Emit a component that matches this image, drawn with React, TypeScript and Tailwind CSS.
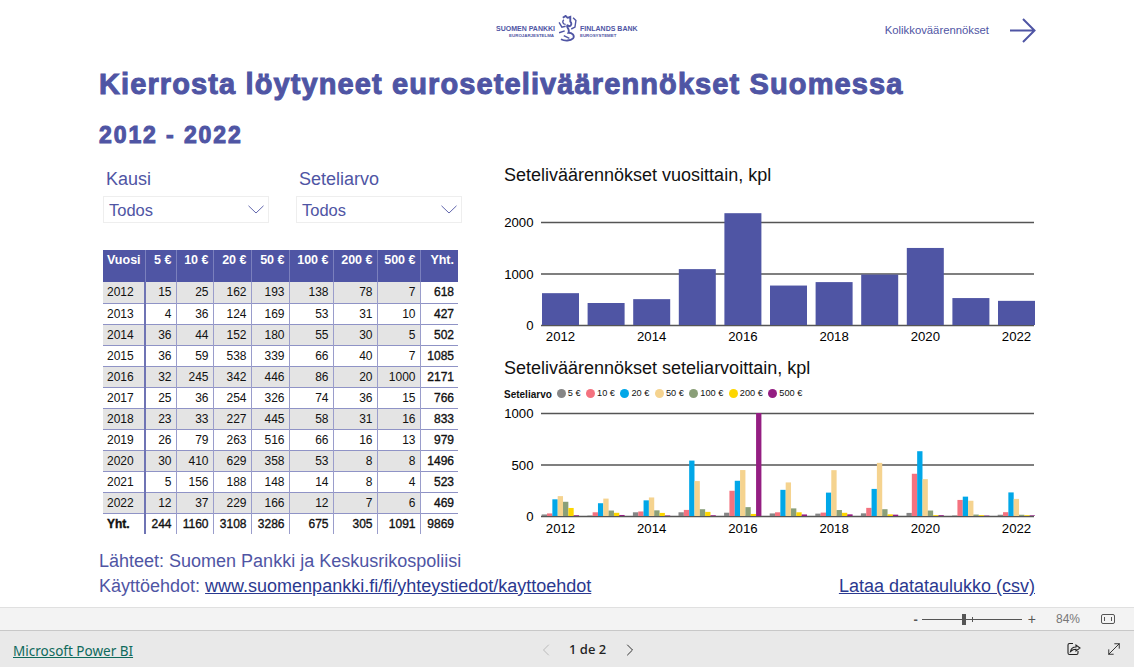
import React from 'react';
import { ChevronLeft, ChevronRight, MoveDiagonal } from 'lucide-react';

const headers = ['Vuosi', '5 €', '10 €', '20 €', '50 €', '100 €', '200 €', '500 €', 'Yht.'];
const colWidths = ['w-[42px]', 'w-[31px]', 'w-[37px]', 'w-[38px]', 'w-[38px]', 'w-[44px]', 'w-[44px]', 'w-[43px]', 'w-[38px]'];

const rows = [
  [2012, 15, 25, 162, 193, 138, 78, 7, 618],
  [2013, 4, 36, 124, 169, 53, 31, 10, 427],
  [2014, 36, 44, 152, 180, 55, 30, 5, 502],
  [2015, 36, 59, 538, 339, 66, 40, 7, 1085],
  [2016, 32, 245, 342, 446, 86, 20, 1000, 2171],
  [2017, 25, 36, 254, 326, 74, 36, 15, 766],
  [2018, 23, 33, 227, 445, 58, 31, 16, 833],
  [2019, 26, 79, 263, 516, 66, 16, 13, 979],
  [2020, 30, 410, 629, 358, 53, 8, 8, 1496],
  [2021, 5, 156, 188, 148, 14, 8, 4, 523],
  [2022, 12, 37, 229, 166, 12, 7, 6, 469],
];
const totals = ['Yht.', 244, 1160, 3108, 3286, 675, 305, 1091, 9869];

const legend = [
  { label: '5 €', color: '#868686' },
  { label: '10 €', color: '#f4727f' },
  { label: '20 €', color: '#01a7e8' },
  { label: '50 €', color: '#f5d38f' },
  { label: '100 €', color: '#8a9f78' },
  { label: '200 €', color: '#fdd600' },
  { label: '500 €', color: '#941e82' },
];

const PITCH = 45.6;
const years = rows.map((r) => r[0]);

const YearLabels = ({ y }: { y: number }) => (
  <>
    {years.map((year, i) =>
      i % 2 === 0 ? (
        <text key={year} x={38 + i * PITCH + 18.5} y={y} textAnchor="middle" fontSize="13.2" fill="#000">
          {year}
        </text>
      ) : null,
    )}
  </>
);

const GridLine = ({ y, label }: { y: number; label: string }) => (
  <>
    <line x1="37" x2="530" y1={y} y2={y} stroke="#555" strokeWidth="1.3" />
    <text x="29.5" y={y + 4.5} textAnchor="end" fontSize="13.2" fill="#000">
      {label}
    </text>
  </>
);

const TotalChart = () => (
  <svg width="531" height="140" className="block">
    <GridLine y={17.5} label="2000" />
    <GridLine y={69} label="1000" />
    <GridLine y={120.5} label="0" />
    {rows.map((r, i) => {
      const h = r[8] * 0.0515;
      return <rect key={r[0]} x={38 + i * PITCH} y={120 - h} width="37" height={h} fill="#4f55a4" />;
    })}
    <YearLabels y={136} />
  </svg>
);

const DenomChart = () => (
  <svg width="531" height="136" className="block">
    <GridLine y={11.5} label="1000" />
    <GridLine y={63} label="500" />
    <GridLine y={114.5} label="0" />
    {rows.map((r, i) =>
      legend.map((l, j) => {
        const h = Math.min(r[j + 1] * 0.103, 103);
        return <rect key={l.label} x={37.7 + i * PITCH + j * 5.33} y={114 - h} width="5.33" height={h} fill={l.color} />;
      }),
    )}
    <YearLabels y={130.5} />
  </svg>
);

const Dropdown = ({ label }: { label: string }) => (
  <div className="w-[166px]">
    <div className="pl-[3px] text-[18px] leading-[22px] text-[#4f55a4]">{label}</div>
    <div className="mt-[6px] flex h-[27px] items-center justify-between border border-[#eeeeee] pl-[5px] pr-[4px]">
      <span className="pt-[1px] text-[16.5px] text-[#4f55a4]">Todos</span>
      <svg width="16" height="9" viewBox="0 0 16 9" fill="none" stroke="#4f55a4" strokeWidth="0.9">
        <path d="M0.5 0.8 L8 8 L15.5 0.8" />
      </svg>
    </div>
  </div>
);

const Logo = () => (
  <div className="flex items-center text-[#4f55a4]">
    <div className="flex w-[59px] flex-col items-end pt-[6px]">
      <span className="text-[7px] font-bold leading-[8px] whitespace-nowrap">SUOMEN PANKKI</span>
      <span className="pr-[1px] text-[4.4px] font-bold leading-[6px] whitespace-nowrap">EUROJÄRJESTELMÄ</span>
    </div>
    <svg width="23" height="28" viewBox="0 0 24 30" fill="none" stroke="currentColor" className="mx-[1px]">
      <path d="M7 3 L10 1 L12 3 L15 2 L15 7 C17 9 16 12 14 12 L12 11 C10 13 15 15 13 19 C17 19 20 22 18 25 C15 28 9 28 5 26" strokeWidth="2" />
      <path d="M8 5 C6 7 7 10 10 10 M3 8 L6 13 L10 12 M18 3 L21 6 L20 13 L16 15 M8 22 L14 25 M3 19 L9 17" strokeWidth="1.5" />
    </svg>
    <div className="flex w-[59px] flex-col items-start pt-[6px]">
      <span className="text-[7px] font-bold leading-[8px] whitespace-nowrap">FINLANDS BANK</span>
      <span className="text-[4.4px] font-bold leading-[6px] whitespace-nowrap">EUROSYSTEMET</span>
    </div>
  </div>
);

const ShareIcon = () => (
  <svg width="14" height="14" viewBox="0 0 14 14" fill="none" stroke="#222" strokeWidth="1.1">
    <path d="M6 1.5 H2.5 C1.5 1.5 1 2 1 3 V11 C1 12 1.5 12.5 2.5 12.5 H9.5 C10.5 12.5 11 12 11 11 V9" />
    <path d="M3.5 9.5 C4 6.5 6 5 9 5 V3 L13 6 L9 9 V7.2 C7 7.2 5 8 3.5 9.5 Z" />
  </svg>
);

const App = () => {
  return (
    <div className="flex h-[667px] w-[1134px] flex-col overflow-hidden bg-white font-['Liberation_Sans',Arial,sans-serif]">
      <main className="flex h-[607px] flex-col">
        {/* Top row */}
        <div className="relative flex h-[60px] items-center justify-end pr-[98px]">
          <div className="absolute left-[496px] top-[15px]">
            <Logo />
          </div>
          <span className="mr-[20px] text-[11.3px] text-[#4f55a4]">Kolikkoväärennökset</span>
          <svg width="27" height="27" viewBox="0 0 27 27" fill="none" stroke="#4f55a4" strokeWidth="2">
            <path d="M1 13.5 H25.5 M14 2 L25.5 13.5 L14 25" />
          </svg>
        </div>

        <h1 className="mt-[8px] pl-[99px] text-[29px] font-bold leading-[32px] tracking-[1.11px] text-[#4f55a4] [-webkit-text-stroke:1px_#4f55a4]">
          Kierrosta löytyneet euroseteliväärennökset Suomessa
        </h1>
        <h2 className="mt-[22px] pl-[99px] text-[23px] font-bold leading-[26px] tracking-[1.9px] text-[#4f55a4] [-webkit-text-stroke:1px_#4f55a4]">
          2012 - 2022
        </h2>

        <div className="flex pl-[103px]">
          {/* Left column */}
          <div className="w-[401px] pt-[20px]">
            <div className="flex gap-[27px]">
              <Dropdown label="Kausi" />
              <Dropdown label="Seteliarvo" />
            </div>
            <table className="mt-[27px] w-[355px] table-fixed border-collapse text-[12px] text-[#111]">
              <colgroup>
                {colWidths.map((w, i) => (
                  <col key={i} className={w} />
                ))}
              </colgroup>
              <thead>
                <tr className="h-[32px] bg-[#4f55a4] text-[12.5px] text-white">
                  {headers.map((h, i) => (
                    <th
                      key={h}
                      className={`whitespace-nowrap px-[4px] pb-[11px] font-bold ${i === 0 ? 'text-left' : 'text-right'} ${i === 8 ? '' : 'border-r border-[#7b80bd]'}`}
                    >
                      {h}
                    </th>
                  ))}
                </tr>
              </thead>
              <tbody>
                {rows.map((r, ri) => (
                  <tr key={r[0]} className="h-[21px] border-b border-[#8f93c6]">
                    {r.map((v, i) => (
                      <td
                        key={i}
                        className={`px-[4px] py-0 ${i === 0 ? 'border-r-2 border-r-[#6f74b4] text-left' : 'text-right'} ${i > 0 && i < 8 ? 'border-r border-r-[#9a9dcb]' : ''} ${i === 8 ? '[-webkit-text-stroke:0.35px_#111]' : ''} ${ri % 2 === 0 && i < 8 ? 'bg-[#e4e4e4]' : ''}`}
                      >
                        {v}
                      </td>
                    ))}
                  </tr>
                ))}
                <tr className="h-[21px] [-webkit-text-stroke:0.35px_#111]">
                  {totals.map((v, i) => (
                    <td
                      key={i}
                      className={`px-[4px] py-0 ${i === 0 ? 'border-r-2 border-r-[#6f74b4] text-left font-bold' : 'text-right'} ${i > 0 && i < 8 ? 'border-r border-r-[#9a9dcb]' : ''}`}
                    >
                      {v}
                    </td>
                  ))}
                </tr>
              </tbody>
            </table>
          </div>

          {/* Right column */}
          <div className="w-[531px] pt-[15px]">
            <div className="text-[18px] leading-[24px] text-[#111]">Seteliväärennökset vuosittain, kpl</div>
            <div className="mt-[18px]">
              <TotalChart />
            </div>
            <div className="mt-[11px] text-[18px] leading-[24px] text-[#111]">Seteliväärennökset seteliarvoittain, kpl</div>
            <div className="mt-[7px] flex h-[14px] items-center text-[9.2px] text-[#111]">
              <span className="mr-[5px] text-[10px] font-bold">Seteliarvo</span>
              {legend.map((l) => (
                <span key={l.label} className="mr-[5.5px] flex items-center gap-[2px]">
                  <span className="h-[9px] w-[9px] rounded-full" style={{ backgroundColor: l.color }} />
                  {l.label}
                </span>
              ))}
            </div>
            <div className="mt-[1px]">
              <DenomChart />
            </div>
          </div>
        </div>

        {/* Sources */}
        <div className="flex items-end justify-between pl-[99px] pr-[99px] pt-[11px] text-[18px] leading-[25px]">
          <div className="text-[#4f55a4]">
            <div>Lähteet: Suomen Pankki ja Keskusrikospoliisi</div>
            <div>
              Käyttöehdot: <span className="text-[#2b3990] underline">www.suomenpankki.fi/fi/yhteystiedot/kayttoehdot</span>
            </div>
          </div>
          <span className="text-[#2b3990] underline">Lataa datataulukko (csv)</span>
        </div>
      </main>

      {/* Zoom bar */}
      <div className="flex h-[24px] items-center justify-end border-y border-y-[#e0e0e0] border-b-[#c8c8c8] bg-[#f3f3f3] pr-[19px] text-[#555]">
        <span className="mr-[4px] text-[13px] font-bold leading-none">-</span>
        <div className="relative h-[1px] w-[100px] bg-[#555]">
          <div className="absolute left-[40px] top-[-5px] h-[11px] w-[4px] bg-[#555]" />
          <div className="absolute left-[50px] top-[-2px] h-[5px] w-[1px] bg-[#555]" />
        </div>
        <span className="ml-[6px] text-[14px] leading-none">+</span>
        <span className="ml-[20px] w-[26px] text-[12px] text-[#777]">84%</span>
        <span className="ml-[19px] flex h-[10px] w-[14px] items-center justify-center rounded-[2px] border border-[#555]">
          <span className="h-[4px] w-[8px] border-x border-[#555]" />
        </span>
      </div>

      {/* Power BI footer */}
      <div className="relative flex flex-1 items-center bg-[#e9e9e9] pl-[13px]">
        <span className="pt-[4px] font-['Noto_Sans',sans-serif] text-[13.5px] text-[#0f6a5c] underline">Microsoft Power BI</span>
        <div className="absolute left-[536px] top-[9px] flex items-center">
          <ChevronLeft size={20} strokeWidth={0.9} className="text-[#aaa]" />
          <span className="ml-[13px] w-[39px] font-['Noto_Sans',sans-serif] text-[13px] font-medium text-[#222]">1 de 2</span>
          <ChevronRight size={20} strokeWidth={1.2} className="ml-[12px] text-[#333]" />
        </div>
        <div className="ml-auto flex items-center gap-[23.5px] pr-[11.5px] text-[#222]">
          <ShareIcon />
          <MoveDiagonal size={18} strokeWidth={1.2} />
        </div>
      </div>
    </div>
  );
};

export default App;
